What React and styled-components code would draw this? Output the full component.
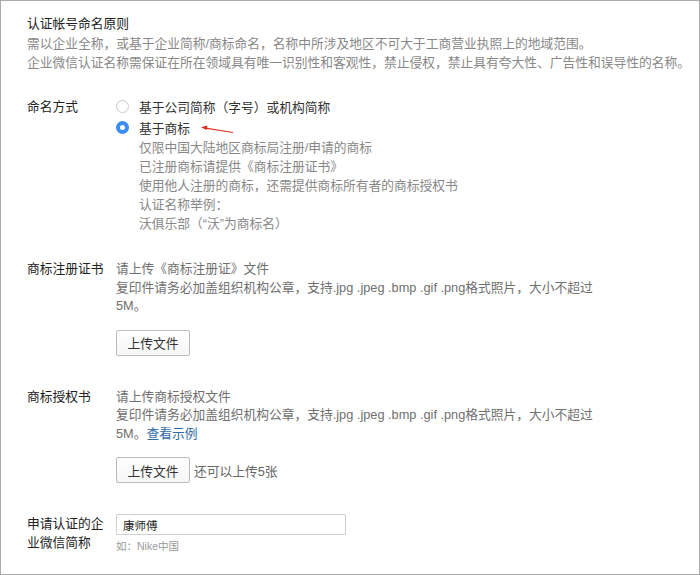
import styled, { createGlobalStyle } from 'styled-components';

const GlobalStyle = createGlobalStyle`
  body {
    margin: 0;
    background: #ffffff;
    font-family: 'Liberation Sans', 'Noto Sans CJK SC', sans-serif;
  }
`;

const Frame = styled.div`
  box-sizing: border-box;
  width: 700px;
  height: 575px;
  border: 1px solid #ababab;
  padding: 13px 0 0 26px;
  font-size: 12.75px;
  color: #222;
`;

const Intro = styled.section`
  margin-bottom: 24px;
`;

const Title = styled.div`
  line-height: 20px;
  color: #222;
`;

const Note = styled.div`
  line-height: 19px;
  color: #888;
`;

const Row = styled.div`
  display: grid;
  grid-template-columns: 80px 1fr;
  column-gap: 9px;
  margin-bottom: ${(p) => p.$gap || 0}px;
`;

const Label = styled.div`
  line-height: ${(p) => p.$lh || 19}px;
  color: #222;
  padding-top: ${(p) => p.$top || 0}px;
`;

const Options = styled.div`
  display: flex;
  flex-direction: column;
`;

const Option = styled.label`
  display: flex;
  align-items: center;
  gap: 10px;
  height: 21px;
  color: #333;
`;

const Radio = styled.span`
  box-sizing: border-box;
  width: 13px;
  height: 13px;
  border-radius: 50%;
  flex-shrink: 0;
  border: ${(p) => (p.$checked ? 'none' : '1px solid #c9c9c9')};
  background: ${(p) => (p.$checked ? '#3a8cf2' : '#fff')};
  display: flex;
  align-items: center;
  justify-content: center;

  &::after {
    content: '';
    display: ${(p) => (p.$checked ? 'block' : 'none')};
    width: 5px;
    height: 5px;
    border-radius: 50%;
    background: #fff;
  }
`;

const Arrow = styled.svg`
  margin-left: 0;
  margin-top: 4px;
`;

const Details = styled.div`
  padding-left: 23px;
`;

const Value = styled.div`
  line-height: ${(p) => p.$lh || 18.5}px;
  color: #707070;
`;

const Link = styled.a`
  color: #2f6aa8;
  text-decoration: none;
`;

const UploadLine = styled.div`
  display: flex;
  align-items: center;
  gap: 4px;
  margin-top: 14px;
  color: #666;
`;

const Button = styled.button`
  box-sizing: border-box;
  width: 74px;
  height: 26px;
  padding: 0;
  border: 1px solid #bcbcbc;
  border-radius: 2px;
  background: linear-gradient(#ffffff, #f6f6f6);
  font-family: inherit;
  font-size: 12.75px;
  color: #333;
`;

const Field = styled.div`
  display: flex;
  flex-direction: column;
`;

const Input = styled.input`
  box-sizing: border-box;
  width: 230px;
  height: 21px;
  border: 1px solid #cfcfcf;
  border-radius: 1px;
  padding: 0 6px;
  font-family: inherit;
  font-size: 11.5px;
  color: #222;
  outline: none;
`;

const Hint = styled.div`
  margin-top: 3px;
  font-size: 10.5px;
  line-height: 16px;
  color: #999;
`;

const trademarkNotes = [
  '仅限中国大陆地区商标局注册/申请的商标',
  '已注册商标请提供《商标注册证书》',
  '使用他人注册的商标，还需提供商标所有者的商标授权书',
  '认证名称举例：',
  '沃俱乐部（“沃”为商标名）',
];

const App = () => {
  return (
    <>
      <GlobalStyle />
      <Frame>
        <Intro>
          <Title>认证帐号命名原则</Title>
          <Note>需以企业全称，或基于企业简称/商标命名，名称中所涉及地区不可大于工商营业执照上的地域范围。</Note>
          <Note>企业微信认证名称需保证在所在领域具有唯一识别性和客观性，禁止侵权，禁止具有夸大性、广告性和误导性的名称。</Note>
        </Intro>

        <Row $gap={27}>
          <Label $top={1}>命名方式</Label>
          <Options>
            <Option>
              <Radio />
              基于公司简称（字号）或机构简称
            </Option>
            <Option>
              <Radio $checked />
              基于商标
              <Arrow width="34" height="10" viewBox="0 0 34 10">
                <path d="M33 7.5 L4 2.8" stroke="#e0311f" strokeWidth="1.2" fill="none" />
                <path d="M1 2.3 L7.5 0.5 L6.7 4.9 Z" fill="#e0311f" />
              </Arrow>
            </Option>
            <Details>
              {trademarkNotes.map((t) => (
                <Note key={t}>{t}</Note>
              ))}
            </Details>
          </Options>
        </Row>

        <Row $gap={32}>
          <Label $lh={18.5}>商标注册证书</Label>
          <div>
            <Value>请上传《商标注册证》文件</Value>
            <Value>
              复印件请务必加盖组织机构公章，支持.jpg .jpeg .bmp .gif .png格式照片，大小不超过
              <br />
              5M。
            </Value>
            <UploadLine>
              <Button type="button">上传文件</Button>
            </UploadLine>
          </div>
        </Row>

        <Row $gap={31}>
          <Label $lh={18.5}>商标授权书</Label>
          <div>
            <Value>请上传商标授权文件</Value>
            <Value>
              复印件请务必加盖组织机构公章，支持.jpg .jpeg .bmp .gif .png格式照片，大小不超过
              <br />
              5M。<Link href="#">查看示例</Link>
            </Value>
            <UploadLine>
              <Button type="button">上传文件</Button>
              还可以上传5张
            </UploadLine>
          </div>
        </Row>

        <Row>
          <Label>申请认证的企业微信简称</Label>
          <Field>
            <Input defaultValue="康师傅" />
            <Hint>如：Nike中国</Hint>
          </Field>
        </Row>
      </Frame>
    </>
  );
};

export default App;
